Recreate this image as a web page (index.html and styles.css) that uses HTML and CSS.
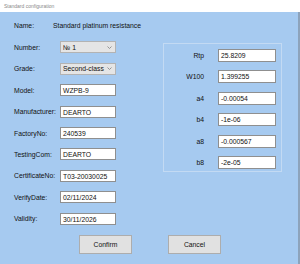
FILE: index.html
```html
<!DOCTYPE html>
<html lang="en">
<head>
    <meta charset="UTF-8">
    <meta name="viewport" content="width=device-width, initial-scale=1.0">
    <title>Standard configuration</title>
    <link rel="stylesheet" href="styles.css">
</head>
<body>
    <div class="window">
        <div class="titlebar">Standard configuration</div>
        <div class="client">
            <div class="name-row">
                <span class="label name-label">Name:</span>
                <span class="name-value">Standard platinum resistance</span>
            </div>
            <div class="main">
                <div class="form">
                    <label class="label">Number:</label>
                    <div class="combo"><span>№ 1</span><svg class="chev" width="5" height="3" viewBox="0 0 5 3"><path d="M0.5 0.5 L2.5 2.5 L4.5 0.5" fill="none" stroke="#808080" stroke-width="0.8"/></svg></div>
                    <label class="label">Grade:</label>
                    <div class="combo"><span>Second-class</span><svg class="chev" width="5" height="3" viewBox="0 0 5 3"><path d="M0.5 0.5 L2.5 2.5 L4.5 0.5" fill="none" stroke="#808080" stroke-width="0.8"/></svg></div>
                    <label class="label">Model:</label>
                    <div class="field">WZPB-9</div>
                    <label class="label">Manufacturer:</label>
                    <div class="field">DEARTO</div>
                    <label class="label">FactoryNo:</label>
                    <div class="field">240539</div>
                    <label class="label">TestingCom:</label>
                    <div class="field">DEARTO</div>
                    <label class="label">CertificateNo:</label>
                    <div class="field">T03-20030025</div>
                    <label class="label">VerifyDate:</label>
                    <div class="field">02/11/2024</div>
                    <label class="label">Validity:</label>
                    <div class="field">30/11/2026</div>
                </div>
                <div class="group">
                    <label class="label">Rtp</label>
                    <div class="field">25.8209</div>
                    <label class="label">W100</label>
                    <div class="field">1.399255</div>
                    <label class="label">a4</label>
                    <div class="field">-0.00054</div>
                    <label class="label">b4</label>
                    <div class="field">-1e-06</div>
                    <label class="label">a8</label>
                    <div class="field">-0.000567</div>
                    <label class="label">b8</label>
                    <div class="field">-2e-05</div>
                </div>
            </div>
            <div class="actions">
                <button class="button">Confirm</button>
                <button class="button">Cancel</button>
            </div>
        </div>
    </div>
</body>
</html>
```

FILE: styles.css
```css
body {
    margin: 0;
    padding: 0;
    font-family: "Liberation Sans", Arial, sans-serif;
    font-size: 6.8px;
    color: #111;
    background-color: #ffffff;
}
.window {
    width: 300px;
    height: 264px;
    display: flex;
    flex-direction: column;
}
.titlebar {
    height: 12px;
    line-height: 12px;
    padding-left: 4px;
    font-size: 5px;
    color: #8a8a8a;
    background-color: #ffffff;
}
.client {
    flex: 1;
    background-color: #a6caf0;
    border-right: 2px solid #8da3bb;
    padding-left: 14px;
}
.name-row {
    display: flex;
    align-items: center;
    height: 13px;
    margin-top: 7px;
}
.name-label {
    width: 39px;
}
.main {
    display: flex;
    align-items: flex-start;
    margin-top: 4.8px;
}
.form {
    display: grid;
    grid-template-columns: 46px 56px;
    grid-auto-rows: 21.4px;
    align-items: center;
}
.group {
    display: grid;
    grid-template-columns: 40px 58px;
    grid-auto-rows: 21.5px;
    align-items: center;
    column-gap: 14px;
    width: 119px;
    height: 129px;
    box-sizing: border-box;
    margin-left: 47px;
    margin-top: 6.7px;
    border: 1px solid #c3daf3;
}
.group .label {
    text-align: right;
}
.field {
    height: 12px;
    line-height: 11px;
    box-sizing: border-box;
    padding-left: 2px;
    background-color: #ffffff;
    border: 1px solid #8f8f8f;
    white-space: nowrap;
    overflow: hidden;
}
.group .field {
    height: 13px;
    line-height: 12px;
}
.combo {
    display: flex;
    justify-content: space-between;
    align-items: center;
    height: 12px;
    box-sizing: border-box;
    padding: 0 3px 0 2px;
    background-color: #e5e5e5;
    border: 1px solid #b3b3b3;
}
.chev {
    display: block;
}
.actions {
    display: flex;
    gap: 36px;
    padding-left: 65px;
    margin-top: 5.6px;
}
.button {
    width: 53px;
    height: 19px;
    padding: 0;
    font-family: "Liberation Sans", Arial, sans-serif;
    font-size: 6.8px;
    color: #111;
    background-color: #e1e1e1;
    border: 1px solid #adadad;
    border-radius: 0;
}
```
